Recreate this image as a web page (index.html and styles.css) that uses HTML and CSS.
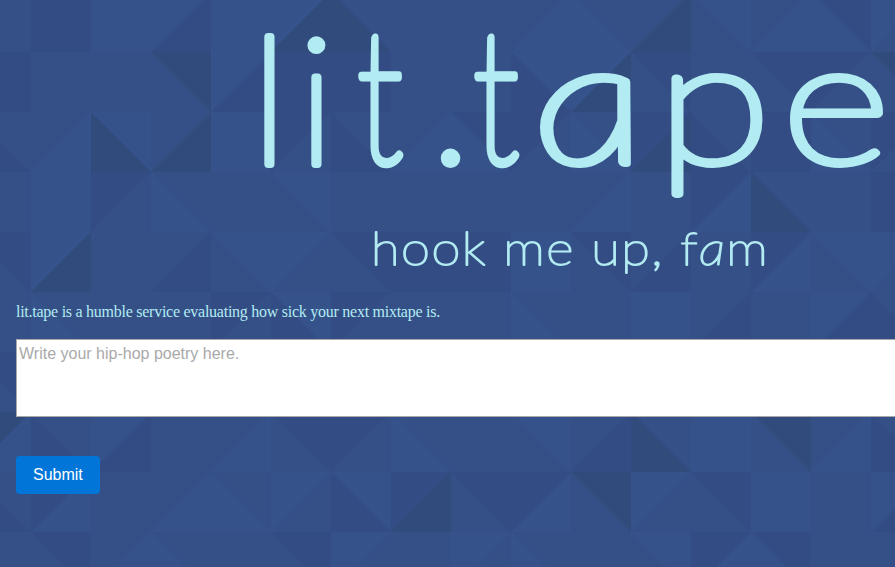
FILE: index.html
```html
<!DOCTYPE html>
<html lang="en">
<head>
    <meta charset="UTF-8">
    <meta name="viewport" content="width=device-width, initial-scale=1.0">
    <title>lit.tape</title>
    <link rel="stylesheet" href="styles.css">
</head>
<body>
    <svg class="pattern js-pattern" aria-hidden="true"></svg>

    <div class="page">
        <h1 class="title">
            <svg class="title-svg" width="1110" height="216">
                <text class="title-text" y="164" x="235 282">li</text>
                <text class="title-text" transform="translate(341 163) scale(0.79 1.04)">t</text>
                <text class="title-text" y="163" x="414">.</text>
                <text class="title-text" transform="translate(457 163) scale(0.79 1.04)">t</text>
                <text class="title-text title-a" transform="translate(525 163) skewX(9.5) scale(1.3 0.98)">a</text>
                <text class="title-text" transform="translate(641 163) scale(1.18 0.98)">p</text>
                <text class="title-text" transform="translate(766 163) scale(1.18 0.98)">e</text>
            </svg>
        </h1>
        <h2 class="subtitle">
            <svg class="title-svg" width="1110" height="76">
                <text class="subtitle-text" transform="translate(355 49) scale(1.14 1)" textLength="348">hook me up, f<tspan class="title-a">a</tspan>m</text>
            </svg>
        </h2>
        <p class="intro">lit.tape is a humble service evaluating how sick your next mixtape is.</p>
        <form class="lyrics-form" onsubmit="return false;">
            <textarea class="lyrics-input" placeholder="Write your hip-hop poetry here."></textarea>
            <button class="submit-button" type="submit">Submit</button>
        </form>
    </div>

    <script src="pattern.js"></script>
</body>
</html>
```
FILE: styles.css
```css
body{
    margin: 0;
    min-height: 567px;
    background-color: #344f86;
    color: #b2ebf2;
    overflow: hidden;
}

.pattern{
    position: absolute;
    top: 0;
    left: 0;
    width: 100%;
    height: 100%;
    z-index: -1;
}

.light{
    fill: #35538a;
}
.mid{
    fill: #345087;
}
.dark{
    fill: #334c83;
}
.darkest{
    fill: #304b7c;
}

.page{
    width: 1110px;
    padding: 0 16px;
}

.title, .subtitle{
    margin: 0;
    font-weight: normal;
}

.title-svg{
    display: block;
    overflow: visible;
}

.title-text{
    font-family: Lato, sans-serif;
    font-size: 177px;
    font-weight: 100;
    fill: #b2ebf2;
    stroke: #b2ebf2;
    stroke-width: 8px;
    stroke-linejoin: round;
}

.title-a{
    font-style: italic;
}

.subtitle-text{
    font-family: Lato, sans-serif;
    font-size: 46px;
    font-weight: 100;
    fill: #b2ebf2;
    stroke: #b2ebf2;
    stroke-width: 1.8px;
    stroke-linejoin: round;
}

.intro{
    margin: 8px 0 16px;
    font-family: "Liberation Serif", serif;
    font-size: 16px;
    line-height: 23px;
    letter-spacing: -0.26px;
}

.lyrics-form{
    display: flex;
    flex-direction: column;
    align-items: flex-start;
    gap: 39px;
}

.lyrics-input{
    box-sizing: border-box;
    width: 100%;
    height: 78px;
    padding: 2px;
    border: 1px solid #a9a9a9;
    background-color: white;
    font-family: "Liberation Sans", Arial, sans-serif;
    font-size: 16px;
    line-height: 24px;
    resize: none;
}
.lyrics-input::placeholder{
    color: #a9a9a9;
}

.submit-button{
    height: 38px;
    padding: 0 17px;
    border: none;
    border-radius: 4px;
    background-color: #0275d8;
    color: white;
    font-family: "Liberation Sans", Arial, sans-serif;
    font-size: 16px;
    cursor: pointer;
}
```
FILE: pattern.js
```js
// one cell: diagonal, left colour, right colour
// l = light, m = mid, d = dark, k = darkest
const rows = [
    '/mm /dd /ll /ld /ll /lk \\km /mm /mm /ml \\lm /mk \\ml /ml \\ld /lm',
    '/dd /mm /mm \\mk /ld /dd /dd /mm /mm \\dl /lk \\md /mm \\md /dm \\mk',
    '\\dm /ml \\kl /mk /ll /dm \\dm /ml \\ld /dm \\lm /dk \\dm /dd \\lm /dm',
    '/mm /ll /dm \\lm /mm \\ml /mm /mm /mm /mm /ml \\mm /dl \\km /mm /dd',
    '\\md /lk \\mm /md \\ml /lm \\md /dd /dd /ll \\md /md \\mm /dl \\ml /lm',
    '/mm \\lm /mm /mm /dm \\dl /dm /mm /mm \\lm /mm /ll /md /mm /ld \\dm',
    '\\md /mm /mm /mm /mm /mm /mm /mm /mm /mm /mm /mm /mm /mm /mm /mm',
    '/kl \\dm /ld \\mm /ml \\md /dm \\lm /mm \\ml /md \\km /ll \\mk /ml \\dm',
    '\\dm /dl \\mm /ml \\lm /lm \\dl /dk \\md /dl \\mk /lm \\md /ll /mm /ld',
    '/mm \\md /ml \\lm /mm \\md /lm /mm /lm \\lm /mm \\ml /dl \\ld /mm /mm'
];
const names = {l: 'light', m: 'mid', d: 'dark', k: 'darkest'};
const size = 60;
const startX = -29;
const startY = -8;

let html = '';
rows.forEach((row, r) => {
    row.split(' ').forEach((cell, c) => {
        const x = startX + c * size;
        const y = startY + r * size;
        const x2 = x + size;
        const y2 = y + size;
        html += `<rect class="${names[cell[1]]}" x="${x}" y="${y}" width="${size}" height="${size}"/>`;
        if (cell[1] != cell[2]){
            const points = cell[0] == '/'
                ? `${x2},${y} ${x2},${y2} ${x},${y2}`
                : `${x},${y} ${x2},${y} ${x2},${y2}`;
            html += `<polygon class="${names[cell[2]]}" points="${points}"/>`;
        }
    });
});
document.querySelector('.js-pattern').innerHTML = html;
```
